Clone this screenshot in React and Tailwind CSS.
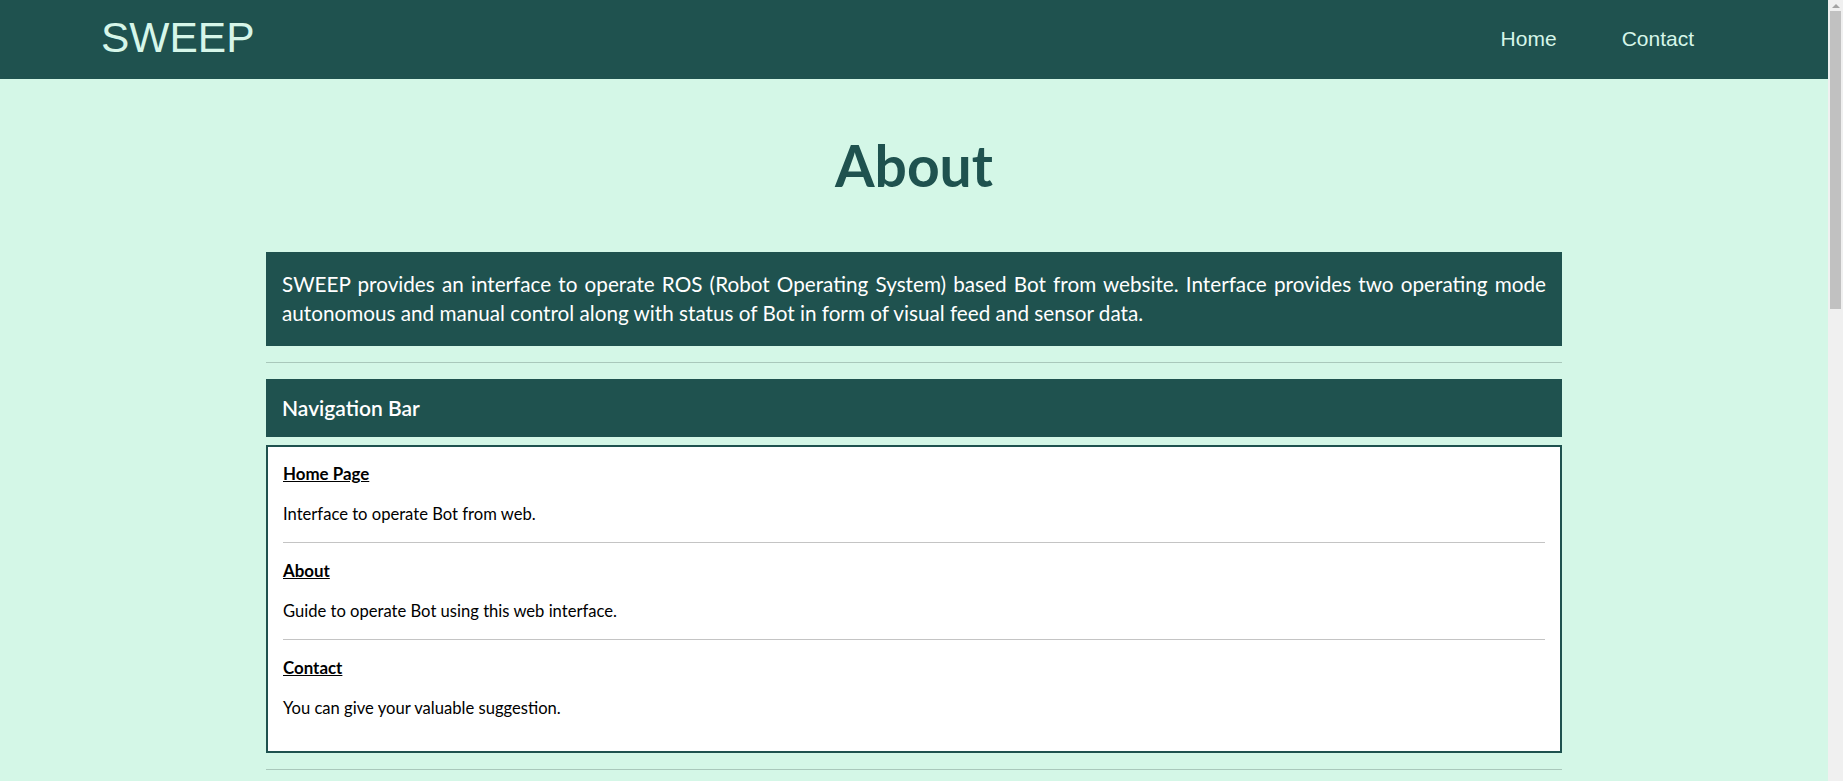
export default function App() {
  const items = [
    { title: "Home Page", text: "Interface to operate Bot from web." },
    { title: "About", text: "Guide to operate Bot using this web interface." },
    { title: "Contact", text: "You can give your valuable suggestion." },
  ];
  const more = [
    { title: "Autonomous Mode", text: "Bot moves on its own and maps the surroundings." },
    { title: "Manual Mode", text: "Control the Bot using the on-screen direction keys." },
    { title: "Visual Feed", text: "Live camera stream from the Bot." },
  ];
  const Box = ({ list }) => (
    <div className="mt-2 border-2 border-[#1f524f] bg-white px-[15px] pt-[15px] pb-[15px] leading-6 text-black">
      {list.map((it, i) => (
        <div key={it.title}>
          {i > 0 && <hr className="mt-4 border-t border-[#c4c4c4]" />}
          <h4 className={"text-[16.9px] font-bold underline leading-6 " + (i > 0 ? "mt-4" : "")}>{it.title}</h4>
          <p className="my-4 text-[16.6px] leading-6">{it.text}</p>
        </div>
      ))}
    </div>
  );
  return (
    <div className="min-h-[1968px] bg-[#d4f7e7] pr-[15px] font-['Lato','Noto_Sans',sans-serif]">
      <header className="flex h-[79px] items-center justify-between bg-[#1f524f] pl-[101px] pr-[134px] pb-[2px] font-['Liberation_Sans',Arial,sans-serif] text-[#d6f6e9]">
        <div className="text-[42.5px] leading-none">SWEEP</div>
        <nav className="flex gap-[65px] text-[21px] leading-none">
          <a>Home</a>
          <a>Contact</a>
        </nav>
      </header>
      <main className="mx-auto w-[1296px]">
        <h1 className="mt-[58px] mb-[59px] text-center text-[57px] font-bold leading-[56px] text-[#1f524f]">About</h1>
        <div className="bg-[#1f524f] px-4 py-[18px] text-[20.7px] leading-[29px] text-white text-justify">
          <div className="[text-align-last:justify]">
            SWEEP provides an interface to operate ROS (Robot Operating System) based Bot from website. Interface provides two operating mode
          </div>
          <div>autonomous and manual control along with status of Bot in form of visual feed and sensor data.</div>
        </div>
        <hr className="my-4 border-t border-[#a9c8bb]" />
        <div className="bg-[#1f524f] px-4 py-[14px] text-[21px] font-semibold leading-[30px] text-white">Navigation Bar</div>
        <Box list={items} />
        <hr className="my-4 border-t border-[#a9c8bb]" />
        <div className="bg-[#1f524f] px-4 py-[14px] text-[21px] font-semibold leading-[30px] text-white">Operating Modes</div>
        <Box list={more} />
        <hr className="my-4 border-t border-[#a9c8bb]" />
      </main>
      <div className="fixed top-0 right-0 flex h-[781px] w-[15px] flex-col items-center bg-[#f0f0f0]">
        <div className="mt-[4px] h-0 w-0 border-x-[4px] border-b-[4px] border-x-transparent border-b-[#a3a3a3]" />
        <div className="mt-[3px] h-[298px] w-[11px] bg-[#c1c1c1]" />
      </div>
    </div>
  );
}
